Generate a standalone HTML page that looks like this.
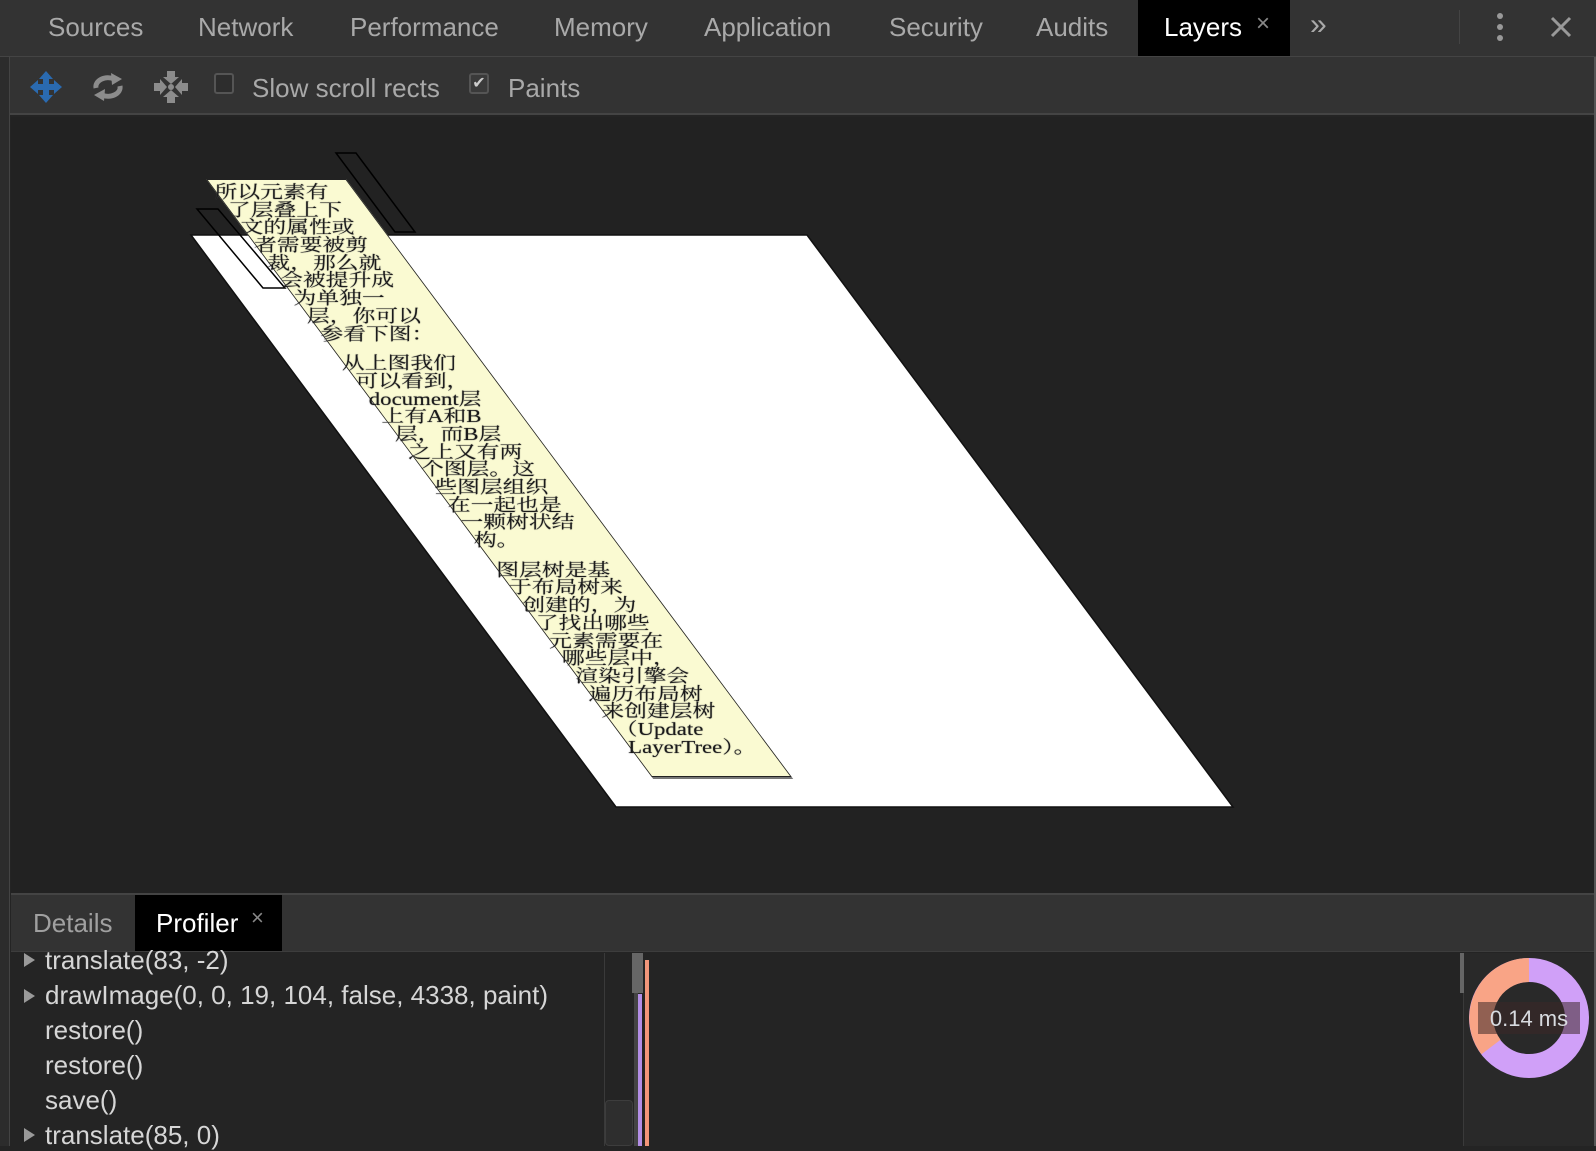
<!DOCTYPE html>
<html><head><meta charset="utf-8"><style>
*{margin:0;padding:0;box-sizing:border-box}
body{width:1596px;height:1146px;background:#242424;position:relative;overflow:hidden;font-family:"Liberation Sans",Arial,sans-serif}
.a{position:absolute;white-space:nowrap}
.tab{position:absolute;top:12px;font-size:26px;color:#a9a9a9}
.tb{position:absolute;top:73px;font-size:26px;color:#a9a9a9}
.row{position:absolute;left:45px;font-size:26px;color:#d6d6d6}
.tri{position:absolute;left:24px;width:0;height:0;border-top:7px solid transparent;border-bottom:7px solid transparent;border-left:11px solid #9a9a9a}
#yel{position:absolute;left:206px;top:179px;width:140px;height:598px;background:#fafad2;transform-origin:0 0;transform:skewX(36.7deg);border:1px solid #222;box-shadow:0 2px 0 #777;padding:5px 0 0 3px;font-family:"Liberation Serif","Noto Serif CJK SC",serif;font-size:19px;line-height:17.7px;color:#1a1a1a}
#yel div{transform:skewX(-36.7deg) scale(1.2,0.92);transform-origin:0 0;white-space:nowrap;height:17.7px;text-shadow:0 0 1px #555}
</style></head><body>
<div class="a" style="left:0;top:0;width:1596px;height:57px;background:#333;border-bottom:1px solid #444"></div>
<div class="tab" style="left:48px">Sources</div>
<div class="tab" style="left:198px">Network</div>
<div class="tab" style="left:350px">Performance</div>
<div class="tab" style="left:554px">Memory</div>
<div class="tab" style="left:704px">Application</div>
<div class="tab" style="left:889px">Security</div>
<div class="tab" style="left:1036px">Audits</div>
<div class="a" style="left:1138px;top:0;width:152px;height:56px;background:#000"></div>
<div class="tab" style="left:1164px;color:#fff">Layers</div>
<div class="tab" style="left:1256px;top:10px;color:#888;font-size:24px">×</div>
<div class="tab" style="left:1310px;top:8px;color:#aaa;font-size:30px">»</div>
<div class="a" style="left:1459px;top:10px;width:1px;height:34px;background:#444"></div>
<div class="a" style="left:1497px;top:13px;width:6px;height:6px;border-radius:3px;background:#999;box-shadow:0 11px 0 #999,0 22px 0 #999"></div>
<svg class="a" style="left:1550px;top:16px" width="22" height="22"><path d="M2 2L20 20M20 2L2 20" stroke="#999" stroke-width="3"/></svg>
<div class="a" style="left:0;top:57px;width:1596px;height:58px;background:#333;border-bottom:2px solid #444"></div>
<div class="a" style="left:0;top:57px;width:10px;height:1089px;background:#2c2c2c;border-right:1px solid #444"></div>
<div class="a" style="left:1594px;top:57px;width:2px;height:1089px;background:#555"></div>
<svg class="a" style="left:28px;top:70px" width="36" height="34" viewBox="0 0 36 34"><path d="M18 1L25 9H21V14H26V10L34 17L26 24V20H21V25H25L18 33L11 25H15V20H10V24L2 17L10 10V14H15V9H11Z" fill="#2a6ab0"/></svg>
<svg class="a" style="left:89px;top:70px" width="38" height="34" viewBox="0 0 38 34"><g fill="none" stroke="#8c8c8c" stroke-width="5"><path d="M7 18A12 9 0 0 1 25 9"/><path d="M31 16A12 9 0 0 1 13 25"/></g><path d="M22 3L33 9L23 15Z M16 19L5 25L15 31Z" fill="#8c8c8c"/></svg>
<svg class="a" style="left:153px;top:70px" width="36" height="34" viewBox="0 0 36 34"><g fill="#8c8c8c"><path d="M14 1H22V7H26L18 14L10 7H14Z"/><path d="M14 33H22V27H26L18 20L10 27H14Z"/><path d="M1 13V21H7V25L14 17L7 9V13Z"/><path d="M35 13V21H29V25L22 17L29 9V13Z"/><circle cx="18" cy="17" r="3"/></g></svg>
<div class="a" style="left:214px;top:73px;width:20px;height:21px;border:2px solid #555;border-radius:3px;background:#2d2d2d"></div>
<div class="tb" style="left:252px">Slow scroll rects</div>
<div class="a" style="left:469px;top:73px;width:20px;height:21px;border:2px solid #555;border-radius:3px;background:#3a3a3a;color:#ccc;font-size:16px;line-height:17px;text-align:center">✔</div>
<div class="tb" style="left:508px">Paints</div>
<div class="a" style="left:11px;top:117px;width:1583px;height:776px;background:#222"></div>
<svg class="a" style="left:0;top:0" width="1596" height="900">
<polygon points="191,235 807,235 1233,807 616,807" fill="#fff" stroke="#111" stroke-width="1.5"/>
<polygon points="336,153 356,153 415,232 395,232" fill="none" stroke="#000" stroke-width="1.5"/>
<polygon points="197,209 218,209 285,288 263,288" fill="none" stroke="#000" stroke-width="1.5"/>
</svg>
<div id="yel">
<div>所以元素有</div><div>了层叠上下</div><div>文的属性或</div><div>者需要被剪</div><div>裁，那么就</div><div>会被提升成</div><div>为单独一</div><div>层，你可以</div><div>参看下图：</div>
<div style="height:12px"></div>
<div>从上图我们</div><div>可以看到，</div><div>document层</div><div>上有A和B</div><div>层，而B层</div><div>之上又有两</div><div>个图层。这</div><div>些图层组织</div><div>在一起也是</div><div>一颗树状结</div><div>构。</div>
<div style="height:12px"></div>
<div>图层树是基</div><div>于布局树来</div><div>创建的，为</div><div>了找出哪些</div><div>元素需要在</div><div>哪些层中，</div><div>渲染引擎会</div><div>遍历布局树</div><div>来创建层树</div><div>（Update</div><div>LayerTree）。</div>
</div>
<div class="a" style="left:11px;top:893px;width:1583px;height:59px;background:#333;border-top:2px solid #444;border-bottom:1px solid #3d3d3d"></div>
<div class="a" style="left:33px;top:908px;font-size:26px;color:#a0a0a0">Details</div>
<div class="a" style="left:135px;top:895px;width:147px;height:56px;background:#000"></div>
<div class="a" style="left:156px;top:908px;font-size:26px;color:#fff">Profiler</div>
<div class="a" style="left:251px;top:905px;font-size:22px;color:#888">×</div>
<div class="a" style="left:11px;top:953px;width:593px;height:193px;background:#242424"></div>
<div class="tri" style="top:953px"></div><div class="row" style="top:945px">translate(83, -2)</div>
<div class="tri" style="top:989px"></div><div class="row" style="top:980px">drawImage(0, 0, 19, 104, false, 4338, paint)</div>
<div class="row" style="top:1015px">restore()</div>
<div class="row" style="top:1050px">restore()</div>
<div class="row" style="top:1085px">save()</div>
<div class="tri" style="top:1128px"></div><div class="row" style="top:1120px">translate(85, 0)</div>
<div class="a" style="left:604px;top:953px;width:1px;height:193px;background:#3a3a3a"></div>
<div class="a" style="left:605px;top:1100px;width:28px;height:46px;background:#2e2e2e;border:1px solid #3d3d3d;border-radius:4px"></div>
<div class="a" style="left:632px;top:953px;width:11px;height:40px;background:#666"></div>
<div class="a" style="left:634px;top:993px;width:4px;height:153px;background:#444"></div>
<div class="a" style="left:638px;top:994px;width:4px;height:152px;background:#b38ee6"></div>
<div class="a" style="left:645px;top:960px;width:4px;height:186px;background:#f2967a"></div>
<div class="a" style="left:1463px;top:953px;width:1px;height:193px;background:#3a3a3a"></div>
<div class="a" style="left:1460px;top:953px;width:8px;height:40px;background:#666"></div>
<div class="a" style="left:1464px;top:953px;width:130px;height:193px;background:#292929"></div>
<svg class="a" style="left:1464px;top:953px" width="130" height="140">
<circle cx="65" cy="65" r="48" fill="none" stroke="#d0a0f8" stroke-width="24"/>
<path d="M65 17A48 48 0 0 0 27 94" fill="none" stroke="#f9a486" stroke-width="24"/>
<rect x="14" y="49" width="102" height="32" fill="rgba(60,40,40,0.55)"/>
<text x="65" y="73" text-anchor="middle" font-family="Liberation Sans" font-size="22" fill="#d8dbe0">0.14 ms</text>
</svg>
</body></html>
